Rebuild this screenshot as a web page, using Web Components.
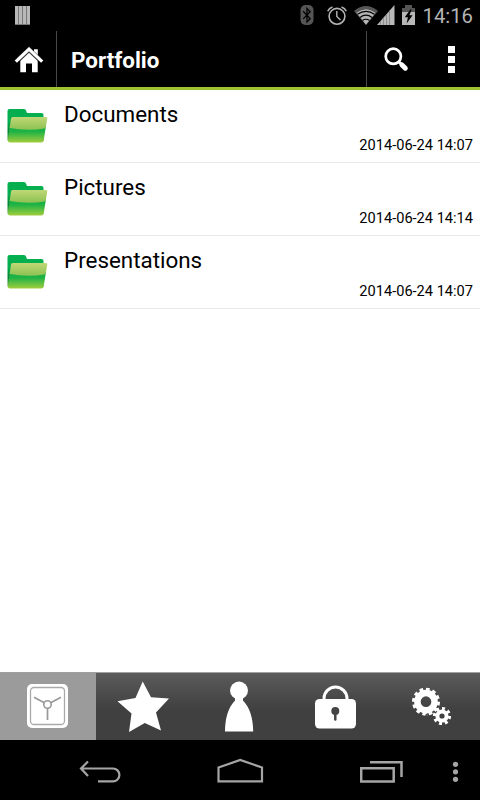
<!DOCTYPE html>
<html lang="en">
<head>
<meta charset="utf-8">
<meta name="viewport" content="width=device-width, initial-scale=1">
<title>Portfolio</title>
<style>
  html, body { margin: 0; height: 100%; background: #fff; }
  body { font-family: Roboto, "Noto Sans", sans-serif; color: #000; overflow: hidden; }
</style>
</head>
<body>
<portfolio-app></portfolio-app>

<script>
function define(name, html) {
  customElements.define(name, class extends HTMLElement {
    constructor() {
      super();
      this.attachShadow({ mode: 'open' }).innerHTML = html;
    }
  });
}

define('status-bar', `
  <style>
    :host { display: flex; align-items: center; height: 31px; padding: 0 7px 0 15px; background: #000; color: #b4b4b4; }
    svg { display: block; flex: none; }
    .bars { margin-right: auto; }
    .bt { margin-right: 13px; }
    .alarm { margin-right: 7px; }
    .signal { margin: 0 7px 0 -1px; }
    .battery { margin-right: 7px; }
    time { font-size: 20.3px; line-height: 31px; padding-top: 1px; }
  </style>
  <svg class="bars" width="15" height="31">
    <path fill="#b8b8b8" d="M0 6h15v19H0z"/>
    <path stroke="#777" d="M3.5 6v19M7.5 6v19M11.5 6v19M0 24.5h15"/>
  </svg>
  <svg class="bt" width="14" height="31">
    <rect x=".5" y="5" width="13" height="20" rx="5" fill="#555"/>
    <path fill="none" stroke="#000" stroke-width="1.3" d="M3.2 11.2l7 7.6L7 22V8.5l3.2 3.2-7 7.2"/>
  </svg>
  <svg class="alarm" width="20" height="31" fill="none" stroke="#b4b4b4">
    <circle cx="10" cy="16.3" r="7.9" stroke-width="1.6"/>
    <path stroke-width="1.4" d="M9.8 11v5.5l3.7 3.5"/>
    <path stroke-width="1.6" d="M.7 11.3Q2 8 5.5 7M19.3 11.3Q18 8 14.5 7"/>
  </svg>
  <svg class="wifi" width="24" height="31" fill="none">
    <path fill="#555" d="M0 11Q12 1 24 11L12 25z"/>
    <path fill="#b4b4b4" d="M2.5 12.8Q12 5.8 21.5 12.8L12 24.8z"/>
    <path stroke="#000" stroke-width="1.2" d="M3.5 14.2Q12 8.5 20.5 14.2M6 17.4Q12 13 18 17.4M8.5 20.5Q12 18 15.5 20.5"/>
  </svg>
  <svg class="signal" width="18" height="31">
    <path fill="#b8b8b8" d="M17.5 5v20H0z"/>
    <path stroke="#808080" stroke-width=".8" d="M3.5 21v4M6.5 17.5v7.5M9.5 14v11M12.5 10.5V25"/>
  </svg>
  <svg class="battery" width="13" height="31">
    <path fill="#555" d="M3 5h7v3h3v6H0V8h3z"/>
    <path fill="#b8b8b8" d="M0 12h13v13H0z"/>
    <path fill="#000" d="M8.3 9.5L2.8 17.3h3.1L4.6 23.5l6-8.300H7.400l2.300-5.700z"/>
  </svg>
  <time>14:16</time>`);

define('action-bar', `
  <style>
    :host { display: flex; height: 56px; background: #000; border-bottom: 3px solid #9dc42e; color: #fff; }
    svg { display: block; flex: none; }
    h1 { flex: 1; margin: 0; padding: 1px 0 0 14px; font-size: 22.4px; line-height: 56px; font-weight: 700; border-left: 1px solid #484848; border-right: 1px solid #484848; }
  </style>
  <svg width="56" height="56" fill="#fff">
    <path d="M34 18.3h3.8v7.700L34 22.500z"/>
    <path d="M29 20.5L37.700 29V41.200H32v-8.700h-6v8.700h-5.700V29z"/>
    <path fill="none" stroke="#333" stroke-width="4.6" d="M18.5 28.6L29 18.5l10.5 10.1"/>
    <path fill="none" stroke="#fff" stroke-width="3.2" d="M15.8 30.7L29 18.2l13.2 12.5"/>
  </svg>
  <h1><slot></slot></h1>
  <svg width="56" height="56" fill="none" stroke="#fff">
    <circle cx="26.3" cy="25.3" r="7.6" stroke-width="2.7"/>
    <path stroke-width="3" d="M32 31l3 3"/>
    <path stroke-width="5" stroke-linecap="round" d="M35 34l3.3 3.2"/>
  </svg>
  <svg width="57" height="56" fill="#fff">
    <path d="M25 15h7v7h-7zM25 25h7v7h-7zM25 35h7v7h-7z"/>
  </svg>`);

define('folder-icon', `
  <style>:host { display: block; } svg { display: block; }</style>
  <svg width="42" height="36">
    <defs>
      <linearGradient id="top" x2="0" y2="1"><stop stop-color="#c0d877"/><stop offset="1" stop-color="#8cc152"/></linearGradient>
      <linearGradient id="low" x2="0" y2="1"><stop stop-color="#0caf46"/><stop offset=".35" stop-color="#20b345"/><stop offset="1" stop-color="#a2cd3c"/></linearGradient>
      <linearGradient id="back" x2="0" y2="1"><stop offset=".4" stop-color="#05ae4e"/><stop offset=".7" stop-color="#067a32"/><stop offset="1" stop-color="#5fb53a"/></linearGradient>
    </defs>
    <path fill="url(#back)" d="M.5 3Q.5 1 2.5 1H17q1.500 0 2 1.500L20 5h14.500Q36.500 5 36.500 7v26H3Q.5 34 .5 32z"/>
    <path fill="url(#low)" d="M2.5 18H39L36.700 32.500Q36.400 34.500 34.300 34.500H3Q.8 34.500 1 32.500z"/>
    <path fill="url(#top)" d="M5.5 9H39q1.600 0 1.300 1.600L38.600 20.300Q21 23.500 2.600 20L4 10.600Q4.200 9 5.500 9z"/>
  </svg>`);

define('file-row', `
  <style>
    :host { display: flex; box-sizing: border-box; height: 73px; padding: 0 7px; border-bottom: 1px solid #e9e9e9; background: #fff; }
    folder-icon { flex: none; margin: 18px 15px 0 0; }
    .info { flex: 1; display: flex; flex-direction: column; }
    .name, .date { display: block; }
    .name { font-size: 22.4px; line-height: 26px; padding-top: 11px; }
    .date { margin-top: 9px; align-self: flex-end; font-size: 14.6px; line-height: 18px; }
  </style>
  <folder-icon></folder-icon>
  <div class="info">
    <slot class="name"></slot>
    <slot class="date" name="date"></slot>
  </div>`);

define('tab-bar', `
  <style>
    :host { display: grid; grid-template-columns: repeat(5, 1fr); height: 67px; border-top: 1px solid #a0a0a0; background: linear-gradient(#5b5b5b, #404040 55%, #404040); }
    .active { background: #9b9b9b; }
    svg { display: block; }
  </style>
  <div class="active"><svg width="96" height="67" fill="none">
    <rect x="27" y="11" width="41" height="44" rx="5" fill="#fff"/>
    <rect x="30.5" y="14.5" width="34" height="37" rx="3.5" stroke="#aaa" stroke-width="1.3"/>
    <circle cx="47.5" cy="31.5" r="3.7" stroke="#999" stroke-width="1.6"/>
    <path stroke="#999" stroke-width="1.7" d="M44.3 29.7L34 24.2M50.7 29.7L61 24.2M47.5 35.2V47"/>
  </svg></div>
  <div><svg width="96" height="67" fill="#fff">
    <path d="M46.7 8.5L55 24.300 73 25.500 60 39.500 65 57.500 48.800 50 33 59 35.500 40.500 21.500 28.300 39.500 25z"/>
  </svg></div>
  <div><svg width="96" height="67" fill="#fff">
    <circle cx="47" cy="17.5" r="9"/>
    <path d="M43 25h8v2.500C58 35 61 45 61.200 58.500H33C33.200 45 36 35 43 27.500z"/>
  </svg></div>
  <div><svg width="96" height="67" fill="none">
    <path stroke="#fff" stroke-width="3" d="M36 28V25.500a11.500 11.500 0 0 1 23 0V28"/>
    <rect x="27" y="26" width="41" height="29.5" rx="4.5" fill="#fff"/>
    <circle cx="47.3" cy="38" r="4" fill="#444"/>
    <path stroke="#444" stroke-width="2.5" stroke-linecap="round" d="M47.3 39v7.500"/>
  </svg></div>
  <div><svg width="96" height="67" fill="none" stroke="#fff">
    <circle cx="42" cy="28.7" r="8.6" stroke-width="6.5"/>
    <circle cx="42" cy="28.7" r="12.5" stroke-width="3" pathLength="96" stroke-dasharray="4.5 3.5"/>
    <circle cx="58" cy="43" r="4.6" stroke-width="4"/>
    <circle cx="58" cy="43" r="7.6" stroke-width="3" pathLength="64" stroke-dasharray="4 4"/>
  </svg></div>`);

define('nav-bar', `
  <style>
    :host { display: flex; height: 60px; padding-left: 79px; background: #000; }
    svg { display: block; flex: none; }
    .home { margin: 0 96px 0 95px; }
    .menu { margin-left: 47px; }
  </style>
  <svg width="43" height="60" fill="none" stroke="#a5a5a5" stroke-width="2.2">
    <path d="M2 28.5H34a6.400 6.400 0 0 1 0 12.800H19M9 21.500L2 28.500l7 7.500"/>
  </svg>
  <svg class="home" width="47" height="60" fill="none" stroke="#a5a5a5" stroke-width="2.2">
    <path d="M1.5 41.3V27.500L23.200 20 45 27.500v13.800z"/>
  </svg>
  <svg width="43" height="60" fill="none" stroke="#a5a5a5" stroke-width="2.5">
    <path d="M1.2 28.3h32.500v13.200H1.200zM10 22.300h31.500V37"/>
  </svg>
  <svg class="menu" width="10" height="60" fill="#a5a5a5">
    <circle cx="5.5" cy="24.3" r="2.6"/><circle cx="5.5" cy="31.8" r="2.6"/><circle cx="5.5" cy="39.3" r="2.6"/>
  </svg>`);

define('portfolio-app', `
  <style>
    :host { display: flex; flex-direction: column; height: 100vh; }
    main { flex: 1; }
  </style>
  <status-bar></status-bar>
  <action-bar>Portfolio</action-bar>
  <main>
    <file-row>Documents<span slot="date">2014-06-24 14:07</span></file-row>
    <file-row>Pictures<span slot="date">2014-06-24 14:14</span></file-row>
    <file-row>Presentations<span slot="date">2014-06-24 14:07</span></file-row>
  </main>
  <tab-bar></tab-bar>
  <nav-bar></nav-bar>`);
</script>
</body>
</html>
